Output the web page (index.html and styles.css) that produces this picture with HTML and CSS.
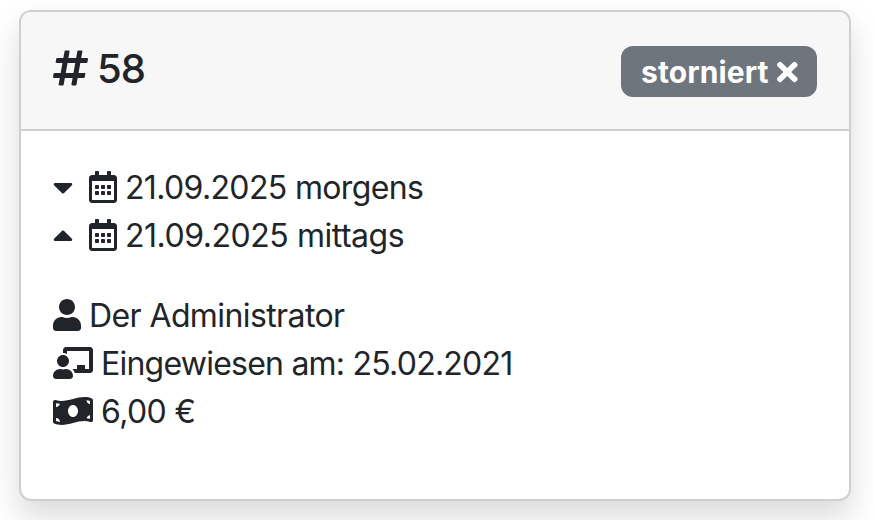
FILE: index.html
```html
<!DOCTYPE html>
<html lang="de">
<head>
    <meta charset="UTF-8">
    <meta name="viewport" content="width=device-width, initial-scale=1.0">
    <title>Buchung 58</title>
    <link rel="stylesheet" href="styles.css">
</head>
<body>
    <div class="card">
        <div class="card-header">
            <h4 class="title">
                <svg class="icon" viewBox="0 0 448 512"><path d="M440.667 182.109l7.143-40c1.313-7.355-4.342-14.109-11.813-14.109h-74.81l14.623-81.891C377.123 38.754 371.468 32 363.997 32h-40.632a12 12 0 0 0-11.813 9.891L296.175 128H197.54l14.623-81.891C213.477 38.754 207.822 32 200.35 32h-40.632a12 12 0 0 0-11.813 9.891L132.528 128H53.432a12 12 0 0 0-11.813 9.891l-7.143 40C33.163 185.246 38.818 192 46.289 192h74.81L98.242 320H19.146a12 12 0 0 0-11.813 9.891l-7.143 40C-1.123 377.246 4.532 384 12.003 384h74.81L72.19 465.891C70.877 473.246 76.532 480 84.003 480h40.632a12 12 0 0 0 11.813-9.891L151.826 384h98.634l-14.623 81.891C234.523 473.246 240.178 480 247.65 480h40.632a12 12 0 0 0 11.813-9.891L315.472 384h79.096a12 12 0 0 0 11.813-9.891l7.143-40c1.313-7.355-4.342-14.109-11.813-14.109h-74.81l22.857-128h79.096a12 12 0 0 0 11.813-9.891zM261.889 320h-98.634l22.857-128h98.634l-22.857 128z"/></svg>
                <span>58</span>
            </h4>
            <div class="badge">
                <span>storniert</span>
                <svg class="icon" viewBox="0 0 352 512"><path d="M242.72 256l100.07-100.07c12.28-12.28 12.28-32.19 0-44.48l-22.24-22.24c-12.28-12.28-32.19-12.28-44.48 0L176 189.28 75.93 89.21c-12.28-12.28-32.19-12.28-44.48 0L9.21 111.45c-12.28 12.28-12.28 32.19 0 44.48L109.28 256 9.21 356.07c-12.28 12.28-12.28 32.19 0 44.48l22.24 22.24c12.28 12.28 32.2 12.28 44.48 0L176 322.72l100.07 100.07c12.28 12.28 32.2 12.28 44.48 0l22.24-22.24c12.28-12.28 12.28-32.19 0-44.48L242.72 256z"/></svg>
            </div>
        </div>
        <div class="card-body">
            <!-- Calendar icon, used for start and end -->
            <svg class="sprite">
                <symbol id="calendar" viewBox="0 0 448 512"><path d="M148 288h-40c-6.6 0-12-5.4-12-12v-40c0-6.6 5.4-12 12-12h40c6.6 0 12 5.4 12 12v40c0 6.6-5.4 12-12 12zm108-12v-40c0-6.6-5.4-12-12-12h-40c-6.6 0-12 5.4-12 12v40c0 6.6 5.4 12 12 12h40c6.6 0 12-5.4 12-12zm96 0v-40c0-6.6-5.4-12-12-12h-40c-6.6 0-12 5.4-12 12v40c0 6.6 5.4 12 12 12h40c6.6 0 12-5.4 12-12zm-96 96v-40c0-6.6-5.4-12-12-12h-40c-6.6 0-12 5.4-12 12v40c0 6.6 5.4 12 12 12h40c6.6 0 12-5.4 12-12zm-96 0v-40c0-6.6-5.4-12-12-12h-40c-6.6 0-12 5.4-12 12v40c0 6.6 5.4 12 12 12h40c6.6 0 12-5.4 12-12zm192 0v-40c0-6.6-5.4-12-12-12h-40c-6.6 0-12 5.4-12 12v40c0 6.6 5.4 12 12 12h40c6.6 0 12-5.4 12-12zm96-260v352c0 26.5-21.5 48-48 48H48c-26.5 0-48-21.5-48-48V112c0-26.5 21.5-48 48-48h48V12c0-6.6 5.4-12 12-12h40c6.6 0 12 5.4 12 12v52h128V12c0-6.6 5.4-12 12-12h40c6.6 0 12 5.4 12 12v52h48c26.5 0 48 21.5 48 48zm-48 346V160H48v298c0 3.3 2.7 6 6 6h340c3.3 0 6-2.7 6-6z"/></symbol>
            </svg>

            <div class="group">
                <div class="row">
                    <svg class="icon caret" viewBox="0 0 320 512"><path d="M31.3 192h257.3c17.8 0 26.7 21.5 14.1 34.1L174.1 354.8c-7.8 7.8-20.5 7.8-28.3 0L17.2 226.1C4.6 213.5 13.5 192 31.3 192z"/></svg>
                    <svg class="icon calendar"><use href="#calendar"/></svg>
                    <span class="text start">21.09.2025 morgens</span>
                </div>
                <div class="row">
                    <svg class="icon caret" viewBox="0 0 320 512"><path d="M288.662 352H31.338c-17.818 0-26.741-21.543-14.142-34.142l128.662-128.662c7.81-7.81 20.474-7.81 28.284 0l128.662 128.662c12.6 12.599 3.676 34.142-14.142 34.142z"/></svg>
                    <svg class="icon calendar"><use href="#calendar"/></svg>
                    <span class="text end">21.09.2025 mittags</span>
                </div>
            </div>

            <div class="group">
                <div class="row">
                    <svg class="icon" viewBox="0 0 448 512"><path d="M224 256c70.7 0 128-57.3 128-128S294.7 0 224 0 96 57.3 96 128s57.3 128 128 128zm89.6 32h-16.7c-22.2 10.2-46.9 16-72.9 16s-50.6-5.8-72.9-16h-16.7C60.2 288 0 348.2 0 422.4V464c0 26.5 21.5 48 48 48h352c26.5 0 48-21.5 48-48v-41.6c0-74.2-60.2-134.4-134.4-134.4z"/></svg>
                    <span class="text">Der Administrator</span>
                </div>
                <div class="row">
                    <svg class="icon" viewBox="0 0 640 512"><path d="M208 352c-2.39 0-4.78.35-7.06 1.09C187.98 357.3 174.35 360 160 360c-14.35 0-27.98-2.7-40.95-6.91-2.28-.74-4.66-1.09-7.05-1.09C49.94 352-.33 402.48 0 464.62.14 490.88 21.73 512 48 512h224c26.27 0 47.86-21.12 48-47.38.33-62.14-49.94-112.62-112-112.62zm-48-32c53.02 0 96-42.98 96-96s-42.98-96-96-96-96 42.98-96 96 42.98 96 96 96zM592 0H208c-26.47 0-48 22.25-48 49.59V96c23.42 0 45.1 6.78 64 17.8V64h352v288h-64v-64H384v64h-76.24c19.1 16.69 33.12 38.73 39.69 64H592c26.47 0 48-22.25 48-49.59V49.59C640 22.25 618.47 0 592 0z"/></svg>
                    <span class="text briefing">Eingewiesen am: 25.02.2021</span>
                </div>
                <div class="row">
                    <svg class="icon" viewBox="0 0 640 512"><path d="M621.16 54.46C582.37 38.19 543.55 32 504.75 32c-123.17-.01-246.33 62.34-369.5 62.34-30.89 0-61.76-3.92-92.65-13.72-3.47-1.1-6.95-1.62-10.35-1.62C15.04 79 0 92.32 0 110.81v317.26c0 12.63 7.23 24.6 18.84 29.46C57.63 473.81 96.45 480 135.25 480c123.17 0 246.34-62.35 369.51-62.35 30.89 0 61.76 3.92 92.65 13.72 3.47 1.1 6.95 1.62 10.35 1.62 17.21 0 32.25-13.32 32.25-31.81V83.93c-.01-12.64-7.24-24.6-18.85-29.47zM48 132.22c20.12 5.04 41.12 7.57 62.72 8.93C104.84 170.54 79 192.69 48 192.69v-60.47zm0 285v-47.78c34.37 0 62.18 27.27 63.71 61.4-22.53-1.81-43.59-6.31-63.71-13.62zM320 352c-44.19 0-80-42.99-80-96 0-53.02 35.82-96 80-96s80 42.98 80 96c0 53.03-35.83 96-80 96zm272 27.78c-17.52-4.39-35.71-6.85-54.32-8.44 5.87-26.08 27.5-45.88 54.32-49.28v57.72zm0-236.11c-30.89-3.91-54.86-29.7-55.81-61.55 19.54 2.17 38.09 6.23 55.81 12.66v48.89z"/></svg>
                    <span class="text">6,00 €</span>
                </div>
            </div>
        </div>
    </div>
</body>
</html>
```
FILE: styles.css
```css
:root {
    --text: #212529;
    --border: #cfcfcf;
    --header-bg: #f7f7f7;
    --badge-bg: #6e757d;
}

* {
    box-sizing: border-box;
    margin: 0;
    padding: 0;
}

body {
    height: 520px;
    padding: 10px 23px 19px 19px;
    overflow: hidden;
    background-color: #fff;
    color: var(--text);
    font-family: Inter, "Liberation Sans", sans-serif;
    font-size: 32px;
    line-height: 48px;
}

.card {
    height: 491px;
    border: 2px solid var(--border);
    border-radius: 12px;
    background-color: #fff;
    box-shadow: 0 16px 32px rgba(0, 0, 0, 0.15);
}

.card-header {
    display: flex;
    justify-content: space-between;
    align-items: center;
    height: 119px;
    padding: 2px 32px 0;
    border-bottom: 2px solid var(--border);
    border-radius: 10px 10px 0 0;
    background-color: var(--header-bg);
}

.icon {
    flex: none;
    height: 1em;
    fill: currentColor;
}

.title {
    display: flex;
    align-items: center;
    gap: 9px;
    padding-bottom: 7px;
    font-size: 40px;
    font-weight: 500;
    letter-spacing: -1px;
}

.title span {
    padding-top: 1px;
}

.badge {
    display: flex;
    align-items: center;
    justify-content: space-between;
    width: 196px;
    height: 51px;
    padding: 0 19px 0 20px;
    border-radius: 12px;
    background-color: var(--badge-bg);
    color: #fff;
    font-size: 30px;
    font-weight: 700;
    letter-spacing: 0.1px;
}

.card-body {
    padding: 32px;
}

.sprite {
    display: none;
}

.group {
    margin-bottom: 32px;
}

.row {
    display: flex;
    align-items: center;
    gap: 8px;
    height: 48px;
    white-space: nowrap;
}

.caret {
    margin-right: 8px;
}

.calendar {
    width: 28px;
}

/* Sits slightly below the icon centre */
.text {
    padding-top: 2px;
    letter-spacing: -0.6px;
}

.start {
    letter-spacing: -0.65px;
}

.end {
    letter-spacing: -0.47px;
}

.briefing {
    letter-spacing: -0.77px;
}
```
